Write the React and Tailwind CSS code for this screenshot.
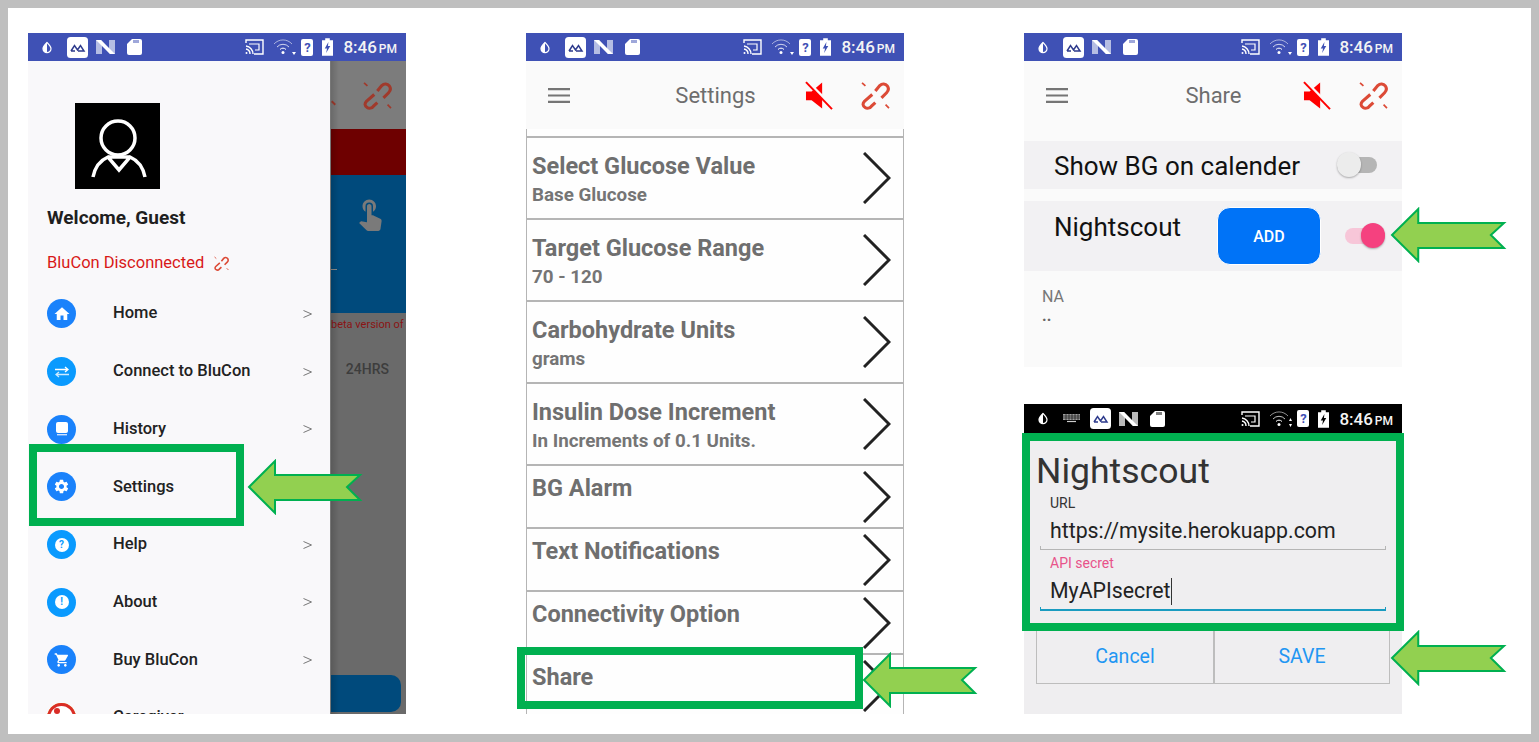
import { MdHome, MdSettings, MdShoppingCart, MdTouchApp } from "react-icons/md";

const menuItems = [
  { label: "Home", color: "bg-[#1a82fb]", icon: "home" },
  { label: "Connect to BluCon", color: "bg-[#0a9afe]", icon: "swap" },
  { label: "History", color: "bg-[#1a82fb]", icon: "book" },
  { label: "Settings", color: "bg-[#1a82fb]", icon: "gear" },
  { label: "Help", color: "bg-[#0a9afe]", icon: "help" },
  { label: "About", color: "bg-[#0a9afe]", icon: "about" },
  { label: "Buy BluCon", color: "bg-[#1a82fb]", icon: "cart" },
  { label: "Caregiver", color: "bg-[#f5a623]", icon: "care" },
];

const settingsRows = [
  { title: "Select Glucose Value", sub: "Base Glucose" },
  { title: "Target Glucose Range", sub: "70 - 120" },
  { title: "Carbohydrate Units", sub: "grams" },
  { title: "Insulin Dose Increment", sub: "In Increments of 0.1 Units." },
  { title: "BG Alarm" },
  { title: "Text Notifications" },
  { title: "Connectivity Option" },
  { title: "Share" },
];

function BrokenLink({ className, color = "#dc4a36" }) {
  return (
    <svg viewBox="0 0 85 82" className={className} fill="none" stroke={color} strokeWidth="9">
      <path d="M42 28 L55 12 C62 5 72 6 77 13 C82 20 80 28 75 33 L60 48" />
      <path d="M33 38 L10 58 C4 64 5 72 12 76 C18 80 26 78 30 73 L42 62" />
      <path d="M3 4 L13 13 M72 68 L82 78" strokeWidth="5" />
    </svg>
  );
}

function MuteIcon() {
  return (
    <svg viewBox="0 0 85 85" className="w-[28px] h-[29px]">
      <path d="M3 30 H20 L52 3 V82 L20 57 H3 Z" fill="#ff0000" />
      <path d="M4 -2 L88 82" stroke="#fafafa" strokeWidth="11" />
      <path d="M3 2 L82 84" stroke="#ff0000" strokeWidth="6" />
    </svg>
  );
}

function StatusBar({ dark }) {
  return (
    <div className={`flex items-center justify-between pl-[14px] pr-[9px] shrink-0 ${dark ? "h-[29px] bg-black" : "h-[28px] bg-[#3f51b5]"}`}>
      <div className="flex items-center">
        <svg viewBox="0 0 10 12" className="w-[10px] h-[13px] mr-[15px]">
          <path d="M5 1 C7 3 9 5 9 7.2 A4 4 0 0 1 1 7.2 C1 5 3 3 5 1 Z" fill="none" stroke="#fff" strokeWidth="1.2" />
          <path d="M5 1 C3 3 1 5 1 7.2 A4 4 0 0 0 5 11 Z" fill="#fff" />
        </svg>
        {dark && (
          <svg viewBox="0 0 17 9" className="w-[17px] h-[9px] mr-[10px]">
            <path d="M0 0 H17 V6 H0 Z" fill="#9e9e9e" />
            <path d="M0 2 H17 M0 4 H17 M3 0 V6 M6 0 V6 M9 0 V6 M12 0 V6 M15 0 V6" stroke="#000" strokeWidth="0.6" />
            <path d="M4 7.5 H13" stroke="#ccc" strokeWidth="1.2" />
          </svg>
        )}
        <svg viewBox="0 0 21 21" className="w-[21px] h-[21px] mr-[8px]">
          <rect width="21" height="21" rx="3.5" fill="#fff" />
          <path d="M4 14 L7.5 8.5 L10.5 13 L13.5 8.5 L17 14 H11 M4 14 H8" fill="none" stroke="#2d3a8c" strokeWidth="1.5" />
        </svg>
        <svg viewBox="0 0 19 16" className="w-[19px] h-[16px] mr-[12px]">
          <path d="M0 1 H5 L13 10 V1 H19 V15 H14 L6 6 V15 H0 Z" fill={dark ? "#b9b9b9" : "#b5bde3"} />
          <path d="M0 1 H5 L19 15 H14 Z" fill="#fff" />
        </svg>
        <svg viewBox="0 0 15 16" className="w-[15px] h-[16px]">
          <path d="M5 0 H13 A2 2 0 0 1 15 2 V14 A2 2 0 0 1 13 16 H2 A2 2 0 0 1 0 14 V5 Z" fill="#fff" />
          <path d="M7 1 V4 M9 1 V4 M11 1 V4" stroke={dark ? "#000" : "#3f51b5"} strokeWidth="1" />
        </svg>
      </div>
      <div className="flex items-center">
        <svg viewBox="0 0 19 16" className="w-[19px] h-[16px] mr-[9px]" fill="none" stroke="#fff" strokeWidth="1.4">
          <path d="M1 4 V1 H18 V15 H9" />
          <path d="M4 5 H14 V11 H10" strokeWidth="1.2" />
          <path d="M1 7 A8 8 0 0 1 8 15 M1 10 A5 5 0 0 1 5 15" />
          <circle cx="1.5" cy="14" r="1" fill="#fff" stroke="none" />
        </svg>
        <svg viewBox="0 0 23 16" className="w-[23px] h-[16px] mr-[5px]" fill="none" stroke="#fff">
          <path d="M1 5 A12 12 0 0 1 19 5" strokeWidth="0.8" opacity="0.7" />
          <path d="M4 8 A8 8 0 0 1 16 8" strokeWidth="0.9" opacity="0.85" />
          <path d="M7 10.5 A4 4 0 0 1 13 10.5" strokeWidth="1" />
          <circle cx="10" cy="13.5" r="1.5" fill="#fff" stroke="none" />
          {dark ? (
            <path d="M21.5 7 L23 10 H20 Z M21.5 16 L20 13 H23 Z" fill="#fff" stroke="none" />
          ) : (
            <path d="M19 13 H23 L21 16 Z" fill="#fff" stroke="none" />
          )}
        </svg>
        <div className="w-[12px] h-[17px] mr-[9px] bg-white rounded-[2px] flex items-center justify-center text-[13px] leading-none font-bold text-[#3f51b5]">?</div>
        <svg viewBox="0 0 12 19" className="w-[11px] h-[18px] mr-[10px]">
          <path d="M3.5 0 H8.5 V2 H12 V19 H0 V2 H3.5 Z" fill="#fff" />
          <path d="M7 4 L3 11 H5.5 L4.5 16 L9 8.5 H6.5 Z" fill={dark ? "#000" : "#3f51b5"} />
        </svg>
        <span className="text-[17px] leading-none font-medium text-[#f4f4f4] mt-[1px]">8:46</span>
        <span className="text-[12px] leading-none font-medium text-[#f4f4f4] ml-[2px] mt-[4px]">PM</span>
      </div>
    </div>
  );
}

function TopBar({ title }) {
  return (
    <div className="h-[68px] shrink-0 flex items-center bg-[#fafafa]">
      <svg viewBox="0 0 22 15" className="w-[22px] h-[15px] ml-[22px]">
        <path d="M0 1.2 H22 M0 7.5 H22 M0 13.8 H22" stroke="#757575" strokeWidth="2.2" />
      </svg>
      <span className="flex-1 text-center text-[22px] text-[#6d6d6d] pl-[56px]">{title}</span>
      <div className="flex items-center gap-[28px] pr-[14px]">
        <MuteIcon />
        <BrokenLink className="w-[29px] h-[29px]" />
      </div>
    </div>
  );
}

function MenuGlyph({ icon }) {
  if (icon === "home") return <MdHome className="text-white w-[18px] h-[18px]" />;
  if (icon === "gear") return <MdSettings className="text-white w-[17px] h-[17px]" />;
  if (icon === "cart") return <MdShoppingCart className="text-white w-[16px] h-[16px]" />;
  if (icon === "swap") {
    return (
      <svg viewBox="0 0 14 12" className="w-[14px] h-[12px]" fill="none" stroke="#fff" strokeWidth="1.3">
        <path d="M0 3.5 H13 M10 1 L13 3.5 L10 6" />
        <path d="M14 8.5 H1 M4 6 L1 8.5 L4 11" opacity="0.8" />
      </svg>
    );
  }
  if (icon === "book") {
    return (
      <svg viewBox="0 0 12 14" className="w-[12px] h-[14px]">
        <rect width="12" height="11" rx="2" fill="#fff" />
        <path d="M1 12.7 H11" stroke="#cfe3ff" strokeWidth="1.4" />
      </svg>
    );
  }
  if (icon === "help" || icon === "about") {
    return (
      <div className="w-[14px] h-[14px] rounded-full bg-white flex items-center justify-center text-[10px] leading-none font-bold text-[#0a9afe]">
        {icon === "help" ? "?" : "!"}
      </div>
    );
  }
  return (
    <svg viewBox="0 0 29 29" className="w-[29px] h-[29px]">
      <circle cx="14.5" cy="14.5" r="13" fill="#fff" stroke="#d92d27" strokeWidth="3" />
      <circle cx="10" cy="8" r="3" fill="#d92d27" />
      <path d="M16 14 A9 9 0 0 1 28 14 L28 22 H16 Z" fill="#f5a623" />
    </svg>
  );
}

function DrawerPhone() {
  return (
    <div className="w-[378px] h-[681px] flex flex-col overflow-hidden shrink-0">
      <StatusBar />
      <div className="flex flex-1 min-h-0">
        <div className="w-[302px] bg-[#f9f8fa] pt-[42px] shrink-0">
          <div className="ml-[47px] w-[85px] h-[86px] bg-black">
            <svg viewBox="0 0 85 86" className="w-[85px] h-[86px]" fill="none" stroke="#fff" strokeWidth="3.5">
              <circle cx="43" cy="35" r="17" />
              <path d="M18 74 C20 64 26 57 33 54 L44 67 L55 54 C62 57 68 64 70 74 M33 54 H55" />
            </svg>
          </div>
          <div className="ml-[19px] mt-[17px] text-[19px] leading-[24px] font-bold text-[#1f1f1f]">Welcome, Guest</div>
          <div className="ml-[19px] mt-[21px] h-[24px] flex items-center text-[16.5px] text-[#d81818]">
            BluCon Disconnected
            <BrokenLink className="w-[15px] h-[15px] ml-[10px]" />
          </div>
          <div className="mt-[10px]">
            {menuItems.map((item) => (
              <div key={item.label} className="h-[57.7px] flex items-center pl-[19px] pr-[18px]">
                <div className={`w-[29px] h-[29px] rounded-full flex items-center justify-center shrink-0 ${item.color}`}>
                  <MenuGlyph icon={item.icon} />
                </div>
                <span className="ml-[37px] flex-1 text-[16.5px] font-medium text-[#222]">{item.label}</span>
                <svg viewBox="0 0 9 8" className="w-[9px] h-[8px]" fill="none" stroke="#777" strokeWidth="1">
                  <path d="M0.5 0.5 L8.5 4 L0.5 7.5" />
                </svg>
              </div>
            ))}
          </div>
        </div>
        <div className="flex-1 flex flex-col bg-[#6a6a6a] border-l border-[#777] min-w-0 relative">
          <div className="h-[68px] bg-[#7c7c7c] flex items-center justify-end pr-[14px]">
            <BrokenLink className="w-[29px] h-[29px]" color="#a03a2c" />
          </div>
          <div className="h-[46px] bg-[#6e0000]" />
          <div className="h-[138px] bg-[#004a7c] flex justify-end pt-[20px] pr-[18px]">
            <MdTouchApp className="w-[36px] h-[36px] text-[#7a7a7a]" />
          </div>
          <div className="text-[11px] text-[#8b1414] whitespace-nowrap pt-[5px] leading-[13px]">beta version of</div>
          <div className="text-right pr-[17px] mt-[28px] text-[14px] font-medium text-[#3d3d3d] leading-[20px]">24HRS</div>
          <div className="mt-auto mb-[2px] h-[37px] mr-[5px] bg-[#004a7c] rounded-r-[10px]" />
          {/* bits of the screen that peek out from under the drawer */}
          <div className="absolute left-0 top-[41px] w-[5px] h-[2px] bg-[#a03a2c] rotate-45" />
          <div className="absolute left-0 top-[208px] w-[6px] h-[1px] bg-[#8a8a8a]" />
          <div className="absolute left-0 top-0 bottom-0 w-[8px] bg-gradient-to-r from-black/15 to-transparent" />
        </div>
      </div>
    </div>
  );
}

function SettingsPhone() {
  return (
    <div className="w-[378px] h-[681px] flex flex-col overflow-hidden shrink-0 bg-[#fefefe]">
      <StatusBar />
      <TopBar title="Settings" />
      <div className="h-[7px] border-x border-[#b5b5b5] shrink-0" />
      {settingsRows.map((row) => (
        <div
          key={row.title}
          className={`flex justify-between items-center border-t-2 border-x border-[#b5b5b5] pl-[5px] pr-[12px] shrink-0 ${row.sub ? "h-[82px]" : "h-[63px]"}`}
        >
          <div className={`self-start ${row.sub ? "pt-[14px]" : "pt-[8px]"}`}>
            <div className="text-[23.5px] leading-[28px] font-bold text-[#6f6f6f] whitespace-nowrap">{row.title}</div>
            {row.sub && <div className="mt-[3px] text-[18.8px] leading-[24px] font-bold text-[#757575] whitespace-nowrap">{row.sub}</div>}
          </div>
          <svg viewBox="0 0 28 52" className="w-[28px] h-[52px] shrink-0" fill="none" stroke="#222" strokeWidth="3">
            <path d="M1 1 L26 26 L1 51" />
          </svg>
        </div>
      ))}
    </div>
  );
}

function SharePhone() {
  return (
    <div className="w-[378px] h-[334px] flex flex-col overflow-hidden shrink-0 bg-[#fafafa]">
      <StatusBar />
      <TopBar title="Share" />
      <div className="pt-[12px]">
        <div className="h-[48px] bg-[#f2f1f3] flex items-center justify-between pl-[30px] pr-[25px]">
          <span className="text-[26px] leading-[32px] mt-[2px] text-[#111]">Show BG on calender</span>
          <div className="relative w-[40px] h-[16px] bg-[#b5b5b5] rounded-full">
            <div className="absolute left-0 top-[-5px] w-[24px] h-[25px] rounded-full bg-[#ececec] shadow-[0_1px_2px_rgba(0,0,0,0.3)]" />
          </div>
        </div>
        <div className="mt-[12px] h-[70px] bg-[#f2f1f3] flex pl-[30px]">
          <span className="text-[26px] leading-[32px] text-[#111] mt-[10px] w-[163px]">Nightscout</span>
          <div className="mt-[6px] w-[104px] h-[58px] rounded-[13px] bg-[#0073f7] border border-white flex items-center justify-center text-[16px] font-medium text-white pt-[1px]">ADD</div>
          <div className="relative ml-[24px] mt-[27px] w-[40px] h-[16px] bg-[#f7c6d8] rounded-full">
            <div className="absolute right-0 top-[-5px] w-[24px] h-[25px] rounded-full bg-[#f5417f] shadow-[0_1px_2px_rgba(0,0,0,0.3)]" />
          </div>
        </div>
        <div className="pl-[18px] pt-[15px] text-[16px] leading-[22px] text-[#777]">
          <div>NA</div>
          <div className="font-bold text-[#666] -mt-[3px]">..</div>
        </div>
      </div>
    </div>
  );
}

function NightscoutDialog() {
  return (
    <div className="w-[378px] h-[310px] flex flex-col overflow-hidden shrink-0 bg-[#efeef0]">
      <StatusBar dark />
      <div className="pl-[12px] pr-[16px]">
        <div className="text-[35.6px] leading-[42px] text-[#333] mt-[17px]">Nightscout</div>
        <div className="pl-[14px] text-[14px] leading-[16px] text-[#333] mt-[3px]">URL</div>
        <div className="pl-[14px] text-[21.3px] leading-[28px] text-[#222] mt-[6px]">https://mysite.herokuapp.com</div>
        <div className="ml-[4px] mt-[1px] h-[4px] border-x border-b border-[#b5b5b5]" />
        <div className="pl-[14px] text-[14px] leading-[16px] text-[#e8538a] mt-[5px]">API secret</div>
        <div className="pl-[14px] text-[21.3px] leading-[28px] text-[#222] mt-[6px] flex items-center">
          MyAPIsecret
          <span className="w-px h-[27px] bg-[#333]" />
        </div>
        <div className="ml-[4px] mt-[2px] h-[4px] border-x border-b-2 border-[#1a9bc0]" />
      </div>
      <div className="mx-[12px] mt-[19px] h-[54px] grid grid-cols-[178px_1fr] border border-t-0 border-[#bdbdbd] text-[19.5px] text-[#2196f3]">
        <div className="flex items-center justify-center border-r-2 border-[#bdbdbd]">Cancel</div>
        <div className="flex items-center justify-center">SAVE</div>
      </div>
    </div>
  );
}

function Arrow({ className }) {
  return (
    <svg viewBox="0 0 116 56" className={className} preserveAspectRatio="none">
      <path d="M2 28 L28 2 V16 H113 L100 28 L113 41 H28 V54 Z" fill="#92d050" stroke="#00b050" strokeWidth="2" />
    </svg>
  );
}

export default function App() {
  return (
    <div className="relative w-[1539px] h-[742px] bg-[#bfbfbf] p-2 overflow-hidden font-['Roboto',sans-serif]">
      <div className="h-full bg-white flex gap-[120px] pl-[20px] pt-[25px]">
        <DrawerPhone />
        <SettingsPhone />
        <div className="flex flex-col gap-[37px]">
          <SharePhone />
          <NightscoutDialog />
        </div>
      </div>

      {/* green callouts on top of the screens */}
      <div className="absolute left-[29px] top-[444px] w-[215px] h-[82px] border-8 border-[#00b050]" />
      <div className="absolute left-[517px] top-[647px] w-[346px] h-[62px] border-8 border-[#00b050]" />
      <div className="absolute left-[1022px] top-[433px] w-[382px] h-[198px] border-8 border-[#00b050]" />
      <Arrow className="absolute left-[247px] top-[459px] w-[116px] h-[56px]" />
      <Arrow className="absolute left-[862px] top-[652px] w-[116px] h-[56px]" />
      <Arrow className="absolute left-[1390px] top-[207px] w-[117px] h-[56px]" />
      <Arrow className="absolute left-[1390px] top-[630px] w-[117px] h-[56px]" />
    </div>
  );
}
